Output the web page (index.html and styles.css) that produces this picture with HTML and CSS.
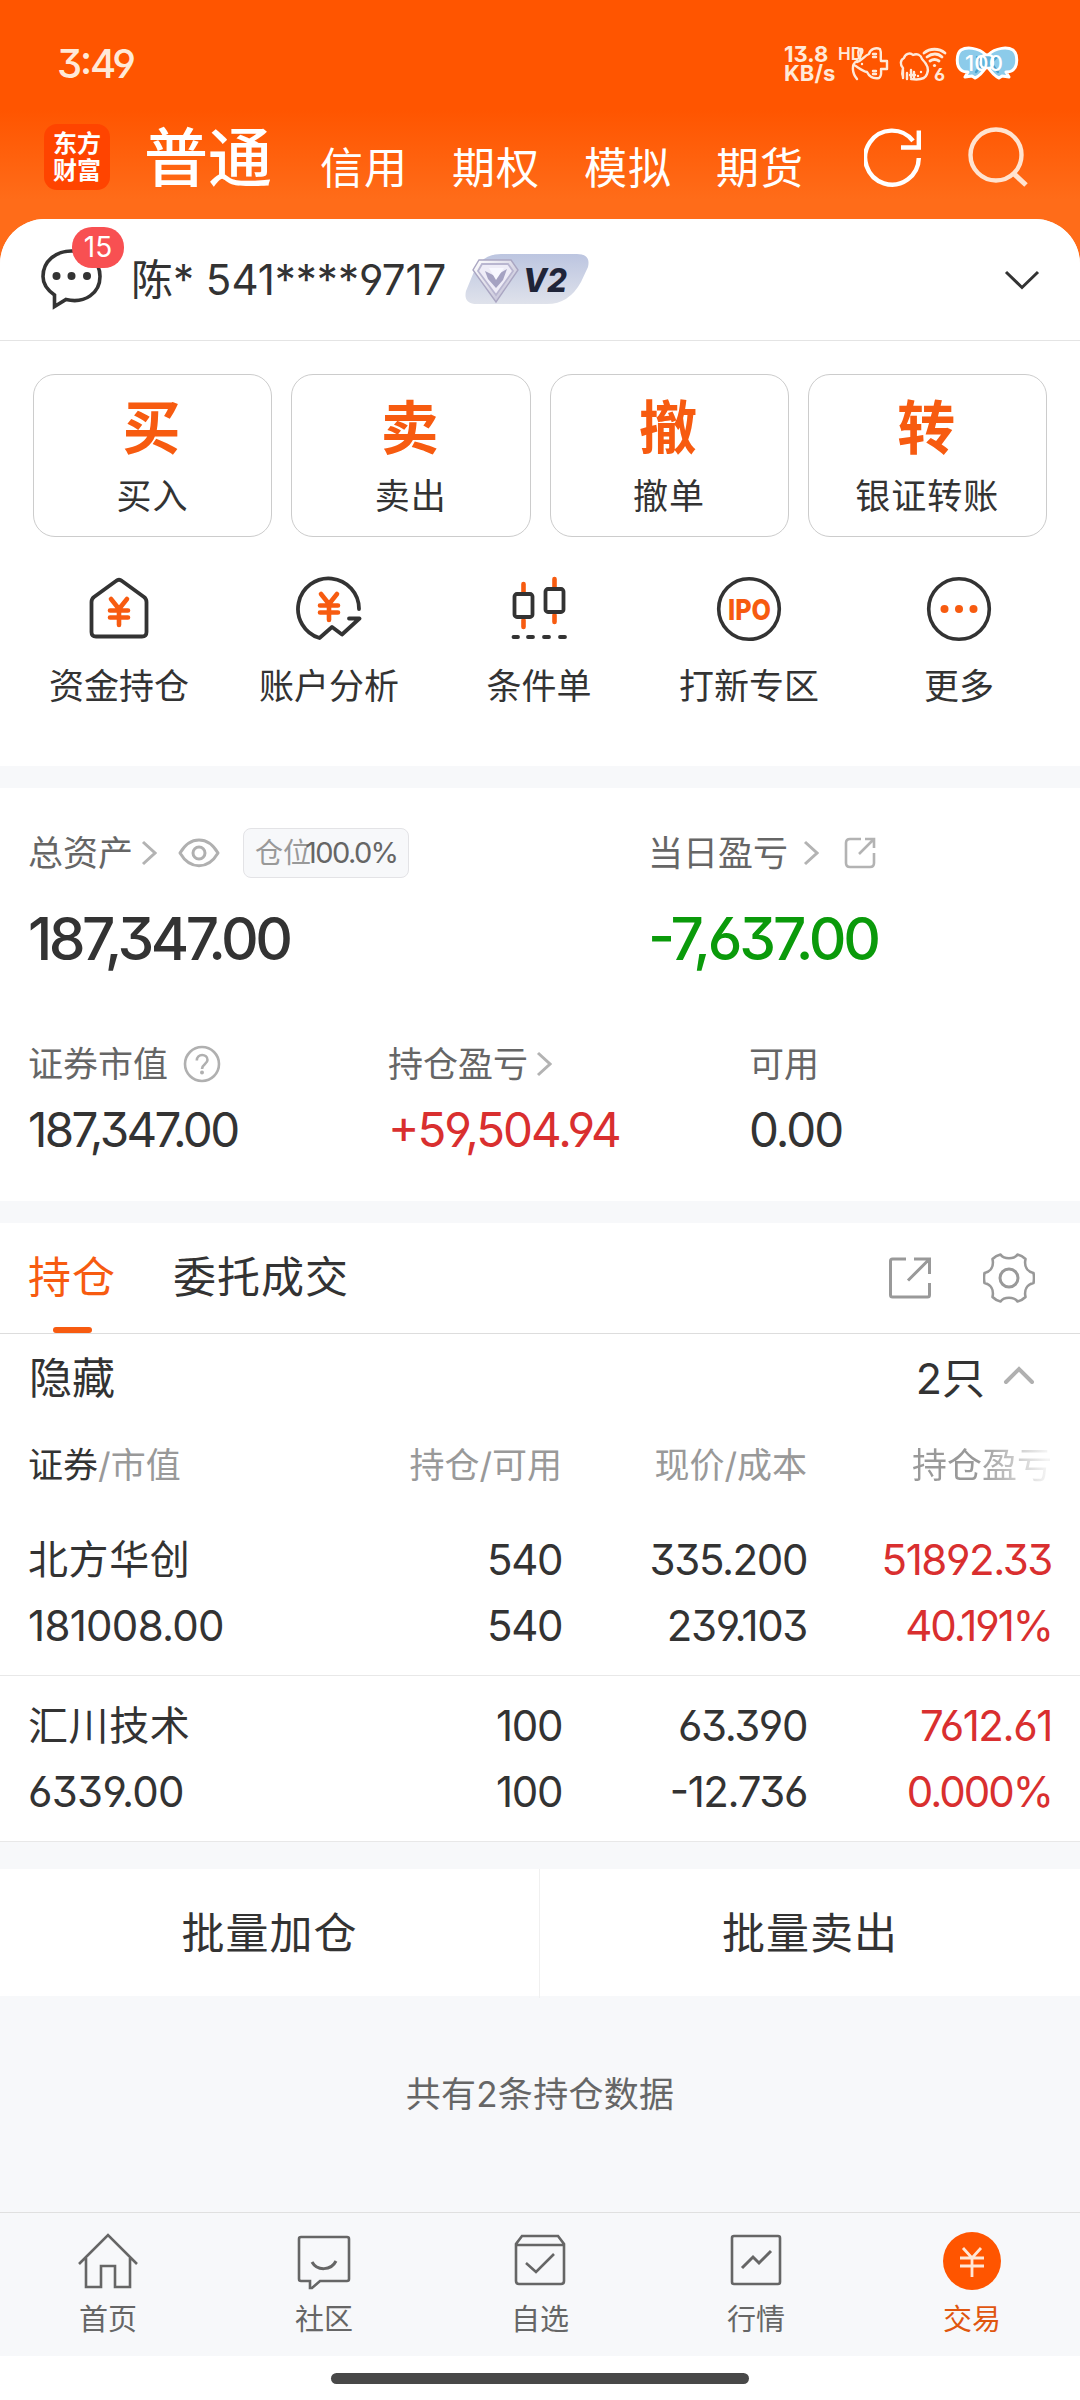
FILE: index.html
```html
<!DOCTYPE html>
<html lang="zh-CN">
<head>
<meta charset="utf-8">
<title>交易</title>
<link rel="stylesheet" href="styles.css">
</head>
<body>
<div class="app">
  <header class="top">
    <div class="status">
      <span class="clock">3:49</span>
      <div class="status-right">
        <div class="speed"><span>13.8</span><span>KB/s</span></div>
        <svg class="status-icons" width="184" height="44" viewBox="838 40 184 44" fill="none" stroke="#ffe9d8" stroke-width="2.400" stroke-linecap="round" stroke-linejoin="round">
          <text class="hd" x="838" y="60">HD</text>
          <path d="M860 59c-2-4-3-8 0-10 3-1 3 3 1 5M857 61c-6 3-5 12 0 18M857 62c5-1 7-6 12-8 1-5 7-7 11-5 2 4 0 9 1 12h6v8h-6c0 4 1 7-2 9-6 1-10-2-12-6-5-1-9-5-13-7"/>
          <path d="M873 54h3M873 57h3M873 71h3M873 74h3M862 64v0"/>
          <path d="M903 77c-2-4 0-6 0-9-3-3-3-8 1-10 1-4 6-6 9-3 4-2 8 0 9 4 4 4 8 9 5 15-2 6-9 6-16 5M903 70v8M907 73v6M911 70v7M914 72v7M910 75h5M921 72v0M918 76v0"/>
          <path d="M924 53c6-5 15-5 21 0M927 57c5-4 11-4 15 0M930 61c3-2 6-2 9 0" stroke-width="2.8"/>
          <circle cx="934.500" cy="65.500" r="1.600" fill="#ffe9d8" stroke="none"/>
          <text class="six" x="934" y="81">6</text>
          <path d="M986 55c-8-8-20-8-25-5-5 4-5 16 0 20 2 2 5 2 7 2l-3 5 7-1 3 2c5-2 8-6 12-12 4 6 7 10 12 12l3-2 7 1-3-5c2 0 5 0 7-2 5-4 5-16 0-20-5-3-17-3-25 5z" fill="#8ccbea" stroke="#fff" stroke-width="3"/>
          <path d="M977 57l6 6-7 9M997 57l-6 6 7 9" stroke="#4aa3cf"/>
          <rect x="981" y="55" width="12" height="13" rx="4" fill="#62b3da" stroke="#fff"/>
          <text class="bat" x="965" y="71" textLength="38">100</text>
        </svg>
      </div>
    </div>
    <nav class="modes">
      <div class="logo"><span>东方</span><span>财富</span></div>
      <span class="mode mode-on">普通</span>
      <span class="mode">信用</span>
      <span class="mode">期权</span>
      <span class="mode">模拟</span>
      <span class="mode">期货</span>
      <svg class="refresh" width="60" height="62" viewBox="0 0 60 62" fill="none" stroke="#fff" stroke-width="4.400"><path d="M54.800 31A26.800 27 0 1 1 49 13.800M54.800 3.500V20.500H37"/></svg>
      <svg class="search" width="60" height="62" viewBox="0 0 60 62" fill="none" stroke="#ffe3d0" stroke-width="4.400"><circle cx="28" cy="28" r="25.500"/><path d="M45 46L58 58" stroke-width="5"/></svg>
    </nav>
  </header>

  <main class="sheet">
    <section class="account">
      <div class="msg">
        <svg width="64" height="64" viewBox="0 0 64 64" fill="none" stroke="#333" stroke-width="3.600"><path d="M14.500 47V58.500L26 51.500C45 56 60 45 60 28.500C60 13 47 3 31.500 3C16 3 3 13 3 28.500C3 36 8 42.500 14.500 47Z"/><circle cx="16.500" cy="28" r="4" fill="#333" stroke="none"/><circle cx="31.500" cy="28" r="4" fill="#333" stroke="none"/><circle cx="47" cy="28" r="4" fill="#333" stroke="none"/></svg>
        <b class="badge">15</b>
      </div>
      <span class="acct">陈* 541****9717</span>
      <svg class="level" width="124" height="50" viewBox="0 0 124 50">
        <defs>
          <linearGradient id="lv" x1="0" y1="0" x2="0" y2="1"><stop offset="0" stop-color="#bcc5e0"/><stop offset="1" stop-color="#dfe2eb"/></linearGradient>
          <linearGradient id="gem" x1="0" y1="0" x2="1" y2="1"><stop offset="0" stop-color="#fff"/><stop offset="1" stop-color="#b9b6d0"/></linearGradient>
        </defs>
        <path d="M36 0H112Q126 0 123 13L116 28Q104 50 82 50H12Q-2 50 1 37L8 20Q16 0 36 0Z" fill="url(#lv)"/>
        <path d="M14 6H46L53 16 31 48 8 16Z" fill="url(#gem)" stroke="#aaa6c2" stroke-width="1.400"/>
        <path d="M17 10H43L48 17 31 41 13 17Z" fill="#eeecf7" stroke="#b9b6d0" stroke-width="1.800"/>
        <path d="M20 17L30 22 42 15 38 26 31 34 23 25Z" fill="#a5a2c2"/><path d="M24 14L31 26 39 14Z" fill="#f8f8ff"/>
        <text class="v2" x="58" y="38" textLength="44" lengthAdjust="spacingAndGlyphs">V2</text>
      </svg>
      <svg class="down" width="36" height="20" viewBox="0 0 36 20" fill="none" stroke="#333" stroke-width="3"><path d="M2 2L18 17.500 34 2"/></svg>
    </section>

    <section class="actions">
      <div class="action"><b>买</b><span>买入</span></div>
      <div class="action"><b>卖</b><span>卖出</span></div>
      <div class="action"><b>撤</b><span>撤单</span></div>
      <div class="action"><b>转</b><span>银证转账</span></div>
    </section>

    <section class="tools">
      <div class="tool">
        <svg width="66" height="66" viewBox="0 0 66 66" fill="none" stroke="#333" stroke-width="3.800" stroke-linejoin="round" stroke-linecap="round"><path d="M30 5Q33 2.500 36 5L58 21Q60.500 23 60.500 26V56Q60.500 60.500 56 60.500H10Q5.500 60.500 5.500 56V26Q5.500 23 8 21Z"/><path class="hot" d="M25 23L33 33 41 23M33 33V49M24 34.500H42M24 41.500H42"/></svg>
        <span>资金持仓</span>
      </div>
      <div class="tool">
        <svg width="66" height="66" viewBox="0 0 66 66" fill="none" stroke="#333" stroke-width="3.800" stroke-linejoin="round" stroke-linecap="round"><path d="M63 33A30.500 30.500 0 1 0 23.500 62L36 51 46 58.500 63.500 42.500H53"/><path class="hot" d="M25 18L33 28 41 18M33 28V44M24 29.500H42M24 36.500H42"/></svg>
        <span>账户分析</span>
      </div>
      <div class="tool">
        <svg width="66" height="66" viewBox="0 0 66 66" fill="none" stroke="#333" stroke-width="3.800" stroke-linejoin="round" stroke-linecap="round"><path class="hot" d="M17.500 8V17M17.500 44V51M48.500 3V12M48.500 39V46"/><rect x="8.500" y="18" width="18" height="23" rx="2.500"/><rect x="39.500" y="13" width="18" height="23" rx="2.500"/><path d="M7.500 61H12M22 61H27M38 61H43M54 61H59"/></svg>
        <span>条件单</span>
      </div>
      <div class="tool">
        <svg width="66" height="66" viewBox="0 0 66 66" fill="none" stroke="#333" stroke-width="3.600"><circle cx="33" cy="33" r="30.300"/><text class="ipo" x="12" y="43.500" textLength="43" lengthAdjust="spacingAndGlyphs">IPO</text></svg>
        <span>打新专区</span>
      </div>
      <div class="tool">
        <svg width="66" height="66" viewBox="0 0 66 66" fill="none" stroke="#333" stroke-width="3.600"><circle cx="33" cy="33" r="30.300"/><g fill="#f75b10" stroke="none"><circle cx="18.500" cy="33" r="4"/><circle cx="33" cy="33" r="4"/><circle cx="47.500" cy="33" r="4"/></g></svg>
        <span>更多</span>
      </div>
    </section>

    <section class="assets">
      <div class="sum">
        <div class="sum-item total">
          <div class="label">总资产
            <svg class="arrow" width="16" height="26" viewBox="0 0 16 26"><path d="M2 2L14 13 2 24"/></svg>
            <svg class="eye" width="42" height="32" viewBox="0 0 42 32" fill="none" stroke="#b0b0b0" stroke-width="3"><path d="M2 16C12-1.500 30-1.500 40 16 30 33 12 33 2 16Z" stroke-linejoin="round"/><circle cx="21" cy="16" r="6"/></svg>
            <span class="pill"><i>仓位</i><em>100.0%</em></span>
          </div>
          <div class="big">187,347.00</div>
        </div>
        <div class="sum-item">
          <div class="label">当日盈亏
            <svg class="arrow arrow-wide" width="16" height="26" viewBox="0 0 16 26"><path d="M2 2L14 13 2 24"/></svg>
            <svg class="share" width="34" height="34" viewBox="0 0 34 34" fill="none" stroke="#b3b3b3" stroke-width="2.600"><path d="M18 3H7Q3 3 3 7V27Q3 31 7 31H27Q31 31 31 27V17M22 3H31V12M31 3L16 18"/></svg>
          </div>
          <div class="big green">-7,637.00</div>
        </div>
      </div>
      <div class="detail">
        <div class="cell">
          <div class="label">证券市值
            <svg class="help" width="38" height="38" viewBox="0 0 38 38" fill="none" stroke="#b0b0b0" stroke-width="2.600"><circle cx="19" cy="19" r="17"/><path d="M13.800 15.500C13.800 8 24.500 8.500 24.500 15 24.500 19 19 19 19 24"/><circle cx="19" cy="27.500" r="2" fill="#b0b0b0" stroke="none"/></svg>
          </div>
          <div class="num worth">187,347.00</div>
        </div>
        <div class="cell">
          <div class="label">持仓盈亏<svg class="arrow" width="16" height="26" viewBox="0 0 16 26"><path d="M2 2L14 13 2 24"/></svg></div>
          <div class="num red">+59,504.94</div>
        </div>
        <div class="cell">
          <div class="label">可用</div>
          <div class="num">0.00</div>
        </div>
      </div>
    </section>

    <section class="holdings">
      <div class="tabs">
        <span class="tab tab-on">持仓</span>
        <span class="tab">委托成交</span>
        <svg class="export" width="44" height="44" viewBox="0 0 44 44" fill="none" stroke="#999" stroke-width="3"><path d="M18 3H4.500Q2.500 3 2.500 5V39Q2.500 41 4.500 41H39.500Q41.500 41 41.500 39V27M26 3H41.500V18M41.500 3L20 24.500"/></svg>
        <svg class="gear" width="52" height="52" viewBox="0 0 52 52" fill="none" stroke="#999" stroke-width="2.600" stroke-linejoin="round"><path d="M17.500 2.500C21 7.500 31 7.500 34.500 2.500Q39 3.500 42.500 7C41 14 44 19.500 50.500 21Q51.500 26 50.500 31C44 32.500 41 38 42.500 45Q39 48.500 34.500 49.500C31 44.500 21 44.500 17.500 49.500Q13 48.500 9.500 45C11 38 8 32.500 1.500 31Q.5 26 1.500 21C8 19.500 11 14 9.500 7Q13 3.500 17.500 2.500Z"/><circle cx="26" cy="26" r="9" stroke-width="3"/></svg>
      </div>
      <div class="group">
        <span>隐藏</span>
        <span class="count">2只</span>
        <svg width="32" height="20" viewBox="0 0 32 20" fill="none" stroke="#b0b0b0" stroke-width="4" stroke-linecap="round"><path d="M3 17L16 4 29 17"/></svg>
      </div>
      <div class="row head">
        <span><b>证券</b>/市值</span><span>持仓/可用</span><span>现价/成本</span><span class="fade">持仓盈亏</span>
      </div>
      <div class="stock">
        <div class="row"><span class="name">北方华创</span><span>540</span><span>335.200</span><span class="red">51892.33</span></div>
        <div class="row"><span class="value">181008.00</span><span>540</span><span>239.103</span><span class="red rate">40.191%</span></div>
      </div>
      <div class="stock">
        <div class="row"><span class="name">汇川技术</span><span>100</span><span>63.390</span><span class="red">7612.61</span></div>
        <div class="row"><span class="value">6339.00</span><span>100</span><span>-12.736</span><span class="red rate">0.000%</span></div>
      </div>
    </section>

    <section class="batch"><span>批量加仓</span><span>批量卖出</span></section>
    <p class="summary">共有2条持仓数据</p>
  </main>

  <nav class="tabbar">
    <div class="nav"><svg width="60" height="60" viewBox="0 0 60 60"><path d="M1 33L30 4 59 33M8 27V56H23V35H37V56H52V27"/></svg><span>首页</span></div>
    <div class="nav"><svg width="60" height="60" viewBox="0 0 60 60"><path d="M7 6H53Q55 6 55 8V48Q55 50 53 50H26L18 57H16V50H7Q5 50 5 48V8Q5 6 7 6Z"/><path d="M18 31C23 40 37 40 42 30" stroke-width="3"/></svg><span>社区</span></div>
    <div class="nav"><svg width="60" height="60" viewBox="0 0 60 60"><path d="M12 5H48L54 13V50Q54 53 51 53H9Q6 53 6 50V13ZM6 14H54M16 32L26 41 44 23"/></svg><span>自选</span></div>
    <div class="nav"><svg width="60" height="60" viewBox="0 0 60 60"><rect x="6" y="5" width="48" height="48" rx="2"/><path d="M16 37L27 26 33 32 45 20" stroke-width="3"/></svg><span>行情</span></div>
    <div class="nav nav-on"><svg width="60" height="60" viewBox="0 0 60 60"><circle cx="30" cy="30" r="29" fill="#ff5500" stroke="none"/><path d="M21 17L30 27 39 17M30 27V46M18 27H42M18 35H42" stroke="#ffe6d6" stroke-width="2.800"/></svg><span>交易</span></div>
  </nav>
  <div class="handle-area"><i class="handle"></i></div>
</div>
</body>
</html>
```
FILE: styles.css
```css
* { box-sizing: border-box; }
body { margin: 0; }
b, i, em { font-style: normal; font-weight: inherit; }
svg { display: block; flex: none; }

.app {
  width: 1080px;
  height: 2400px;
  display: flex;
  flex-direction: column;
  overflow: hidden;
  background: linear-gradient(#ff5500 0, #ff5500 110px, #ff6c19 200px, #ff6c19 280px, #f7f8fa 280px);
  color: #333;
  font-family: Inter, "Noto Sans CJK SC", sans-serif;
  font-feature-settings: "cv03", "cv04", "cv09", "case";
  font-size: 35px;
  white-space: nowrap;
}

/* status bar and mode switcher */
.top { height: 219px; flex: none; }
.status { height: 106px; padding: 22px 58px 0 57px; display: flex; justify-content: space-between; align-items: flex-start; color: #ffe9d8; }
.clock { font-size: 40px; line-height: 83px; font-weight: 500; letter-spacing: -2.2px; }
.status-right { display: flex; padding-top: 18px; }
.speed { width: 54px; display: flex; flex-direction: column; font-size: 22px; line-height: 19px; padding-top: 5px; font-weight: 700; }
.status-icons text { fill: #ffe9d8; stroke: none; }
.status-icons .hd { font-size: 17px; font-weight: 600; }
.six { font-size: 18px; font-weight: 700; }
.status-icons .bat { font-size: 22px; fill: #fff; font-weight: 500; }
.modes { height: 113px; padding-left: 44px; display: flex; align-items: flex-start; color: #fff; }
.logo {
  width: 66px; height: 66px; margin: 18px 34px 0 0; padding-top: 6px; border-radius: 13px; background: #ff4400;
  display: flex; flex-direction: column; align-items: center; font-size: 24px; line-height: 27px; font-weight: 700;
}
.mode { font-size: 43px; line-height: 60px; margin: 32px 44px 0 0; letter-spacing: 1px; }
.mode-on { font-size: 64px; line-height: 80px; margin: 12px 48px 0 0; font-weight: 500; letter-spacing: 0; }
.refresh { margin: 21px 44px 0 16px; }
.search { margin-top: 21px; }

/* white sheet */
.sheet { background: #f7f8fa; border-radius: 45px 45px 0 0; flex: 1; overflow: hidden; }
.account { height: 122px; background: #fff; border-bottom: 1px solid #e4e4e4; padding: 0 40px; display: flex; align-items: center; }
.msg { position: relative; width: 64px; height: 64px; margin-right: 27px; }
.badge {
  position: absolute; left: 32px; top: -21px; width: 52px; height: 41px; border-radius: 20px;
  background: #f85052; color: #fff; font-size: 28px; line-height: 41px; text-align: center;
}
.acct { width: 334px; font-size: 42px; line-height: 60px; font-feature-settings: "cv03", "cv04", "cv09"; }
.level { margin-top: -2px; }
.v2 { font-size: 33px; font-weight: 800; font-style: italic; fill: #1f2438; }
.down { margin-left: auto; }

.actions { background: #fff; padding: 33px 33px 0; display: grid; grid-template-columns: repeat(4, 1fr); gap: 19px; }
.action { height: 163px; border: 1px solid #ccc; border-radius: 22px; display: flex; flex-direction: column; align-items: center; padding-top: 19px; letter-spacing: 1px; }
.action b { font-size: 58px; line-height: 68px; font-weight: 700; color: #f75b10; letter-spacing: 0; margin-right: 2px; }
.action span { line-height: 50px; margin-top: 9px; }

.tools { background: #fff; height: 229px; padding: 39px 15px 0 14px; display: grid; grid-template-columns: repeat(5, 210px); }
.tool { display: flex; flex-direction: column; align-items: center; }
.tool span { line-height: 50px; margin-top: 19px; }
.hot { stroke: #f75b10; stroke-width: 4.6; }
.ipo { font-size: 29px; font-weight: 800; fill: #f75b10; stroke: none; }

/* assets */
.assets { background: #fff; margin-top: 22px; height: 413px; padding: 40px 28px 0; color: #666; }
.sum { display: grid; grid-template-columns: 620px 1fr; }
.label { height: 50px; line-height: 50px; display: flex; align-items: center; }
.arrow { margin-left: 8px; fill: none; stroke: #b3b3b3; stroke-width: 3; }
.arrow-wide { margin-left: 15px; }
.eye { margin-left: 21px; }
.share { margin-left: 24px; }
.help { margin-left: 15px; }
.pill {
  margin-left: 23px; width: 166px; height: 50px; border: 1px solid #e3e3e6; border-radius: 8px; background: #f7f8fa;
  padding-left: 11px; display: flex; align-items: center; font-size: 28px; color: #999;
}
.pill em { margin-left: -6px; font-size: 29px; color: #666; letter-spacing: -1.6px; }
.big { font-size: 58.5px; line-height: 70px; margin-top: 26px; font-weight: 500; color: #333; letter-spacing: -3.5px; }
.detail { margin-top: 65px; display: grid; grid-template-columns: 360px 361px 1fr; }
.num { font-size: 47.5px; line-height: 60px; margin-top: 11px; color: #333; letter-spacing: -2px; }
.worth { letter-spacing: -2.6px; }
.big.green { color: #0a9a0a; letter-spacing: -3.2px; }
.red, .num.red { color: #d92f2f; }

/* holdings */
.holdings { background: #fff; margin-top: 22px; height: 619px; border-bottom: 1px solid #e8e8e8; }
.tabs { height: 111px; border-bottom: 1px solid #ddd; padding: 0 45px 0 28px; display: flex; align-items: center; font-size: 43px; letter-spacing: 1px; }
.tab { height: 110px; line-height: 108px; margin-right: 57px; }
.tab-on { color: #f75b10; display: flex; flex-direction: column; align-items: center; }
.tab-on::after { content: ""; width: 39px; height: 6px; margin-top: -4px; border-radius: 3px; background: #f75b10; }
.export { margin-left: auto; }
.gear { margin-left: 51px; }
.group { height: 84px; padding: 0 45px 2px 29px; display: flex; align-items: center; font-size: 43px; }
.count { margin: 0 18px 0 auto; }
.row { display: grid; grid-template-columns: 281px 253px 245px 245px; padding: 0 28px; font-size: 42px; line-height: 66px; letter-spacing: -1.4px; }
.row > span + span { text-align: right; }
.row.head { font-size: 35px; line-height: 60px; height: 91px; padding-top: 17px; color: #999; letter-spacing: 0; }
.head b { color: #333; }
.fade { background: linear-gradient(90deg, #999 70%, #f4f4f4 98%); background-clip: text; -webkit-background-clip: text; color: transparent; }
.stock { height: 166px; padding-top: 18px; }
.stock + .stock { border-top: 1px solid #e8e8e8; padding-top: 17px; }
.row .name { font-size: 40px; letter-spacing: 0.6px; }
.row .value { letter-spacing: -0.7px; }
.row .rate { letter-spacing: -2px; }

.batch { margin-top: 27px; height: 127px; background: #fff; display: grid; grid-template-columns: 539px 1fr; font-size: 43px; line-height: 129px; text-align: center; letter-spacing: 1px; }
.batch span + span { border-left: 1px solid #f0f0f0; }
.summary { margin: 68px 0 0; line-height: 60px; text-align: center; color: #666; letter-spacing: 0.3px; }

/* bottom navigation */
.tabbar { height: 144px; flex: none; background: #f7f8fa; border-top: 1px solid #e0e0e0; display: grid; grid-template-columns: repeat(5, 1fr); font-size: 29px; color: #666; }
.nav { display: flex; flex-direction: column; align-items: center; padding-top: 18px; }
.nav svg { fill: none; stroke: #666; stroke-width: 2.6; }
.nav span { line-height: 40px; margin-top: 9px; }
.nav-on { color: #e0560f; }
.handle-area { height: 44px; flex: none; background: #fff; padding-top: 17px; }
.handle { display: block; width: 418px; height: 11px; margin: 0 auto; border-radius: 6px; background: #484848; }
```
